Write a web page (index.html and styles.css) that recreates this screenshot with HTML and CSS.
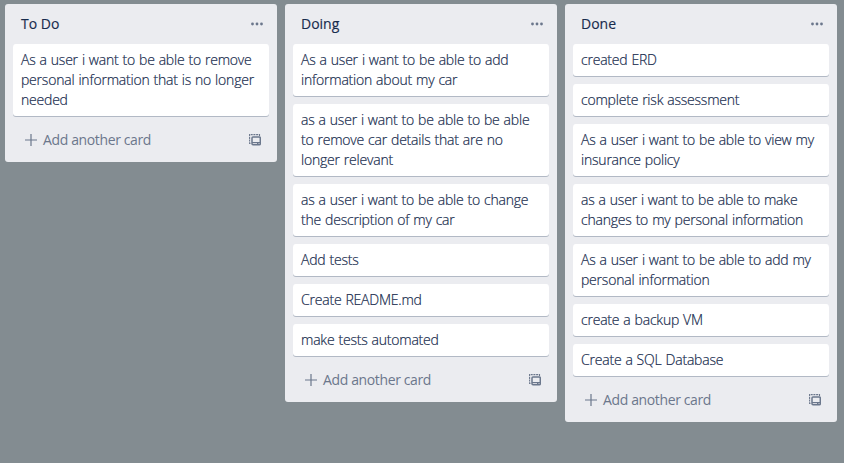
FILE: index.html
```html
<!DOCTYPE html>
<html lang="en">
<head>
<meta charset="utf-8">
<title>Board</title>
<link rel="stylesheet" href="styles.css">
</head>
<body>
<svg class="sprite" width="0" height="0">
  <symbol id="dots" viewBox="0 0 16 16"><circle cx="3.500" cy="8" r="1.400"/><circle cx="8" cy="8" r="1.400"/><circle cx="12.500" cy="8" r="1.400"/></symbol>
  <symbol id="plus" viewBox="0 0 14 14"><path d="M7 1v12M1 7h12" fill="none" stroke="currentColor" stroke-width="1.200"/></symbol>
  <symbol id="template" viewBox="0 0 12 12"><path d="M1.500 9.400H.6V.6H10.500V2" fill="none" stroke="currentColor" stroke-width="1.100" stroke-dasharray="2 .7"/><rect x="3" y="3" width="8.300" height="7.800" rx="1" fill="none" stroke="currentColor" stroke-width="1.500"/><path d="M3 8.600h8" stroke="currentColor" stroke-width="1.200"/><path d="M8 8.800h1.500v2H8z" fill="currentColor"/></symbol>
</svg>
<main class="board">
  <section class="list">
    <header class="list-header"><h2>To Do</h2><svg class="dots"><use href="#dots"/></svg></header>
    <div class="cards">
      <article class="card">As a user i want to be able to remove<br>personal information that is no longer<br>needed</article>
    </div>
    <footer class="list-footer"><svg class="plus"><use href="#plus"/></svg><span>Add another card</span><svg class="template"><use href="#template"/></svg></footer>
  </section>
  <section class="list">
    <header class="list-header"><h2>Doing</h2><svg class="dots"><use href="#dots"/></svg></header>
    <div class="cards">
      <article class="card">As a user i want to be able to add<br>information about my car</article>
      <article class="card">as a user i want to be able to be able<br>to remove car details that are no<br>longer relevant</article>
      <article class="card">as a user i want to be able to change<br>the description of my car</article>
      <article class="card">Add tests</article>
      <article class="card">Create README.md</article>
      <article class="card">make tests automated</article>
    </div>
    <footer class="list-footer"><svg class="plus"><use href="#plus"/></svg><span>Add another card</span><svg class="template"><use href="#template"/></svg></footer>
  </section>
  <section class="list">
    <header class="list-header"><h2>Done</h2><svg class="dots"><use href="#dots"/></svg></header>
    <div class="cards">
      <article class="card">created ERD</article>
      <article class="card">complete risk assessment</article>
      <article class="card">As a user i want to be able to view my<br>insurance policy</article>
      <article class="card">as a user i want to be able to make<br>changes to my personal information</article>
      <article class="card">As a user i want to be able to add my<br>personal information</article>
      <article class="card">create a backup VM</article>
      <article class="card">Create a SQL Database</article>
    </div>
    <footer class="list-footer"><svg class="plus"><use href="#plus"/></svg><span>Add another card</span><svg class="template"><use href="#template"/></svg></footer>
  </section>
</main>
</body>
</html>
```
FILE: styles.css
```css
* { box-sizing: border-box; }
body { margin: 0; background: #838c91; color: #172b4d; font: 14px/20px "Open Sans", "Noto Sans", sans-serif; }
.sprite { display: block; }
.board { display: flex; align-items: flex-start; gap: 8px; padding: 4px 5px; height: 463px; overflow: hidden; }
.list { flex: 0 0 272px; min-width: 0; background: #ebecf0; border-radius: 3px; }
.list-header { display: flex; justify-content: space-between; align-items: center; height: 40px; padding: 0 12px 0 16px; }
h2 { margin: 0; font-size: 14px; line-height: 20px; font-weight: 500; -webkit-text-stroke: .15px; }
.dots { width: 16px; height: 16px; fill: #6b778c; }
.cards { display: flex; flex-direction: column; gap: 8px; padding: 0 8px; }
.card { background: #fff; border-radius: 3px; box-shadow: 0 1px 0 rgba(9,30,66,.25); padding: 6px 8px; white-space: nowrap; font-weight: 300; letter-spacing: -.21px; word-spacing: .6px; -webkit-text-stroke: .2px; }
.list-footer { display: flex; align-items: center; height: 46px; padding: 2px 16px 0 19px; color: #6b778c; }
.list-footer span { letter-spacing: -.37px; }
.plus { width: 14px; height: 14px; margin-right: 5px; }
.template { width: 12px; height: 12px; margin-left: auto; }
```
